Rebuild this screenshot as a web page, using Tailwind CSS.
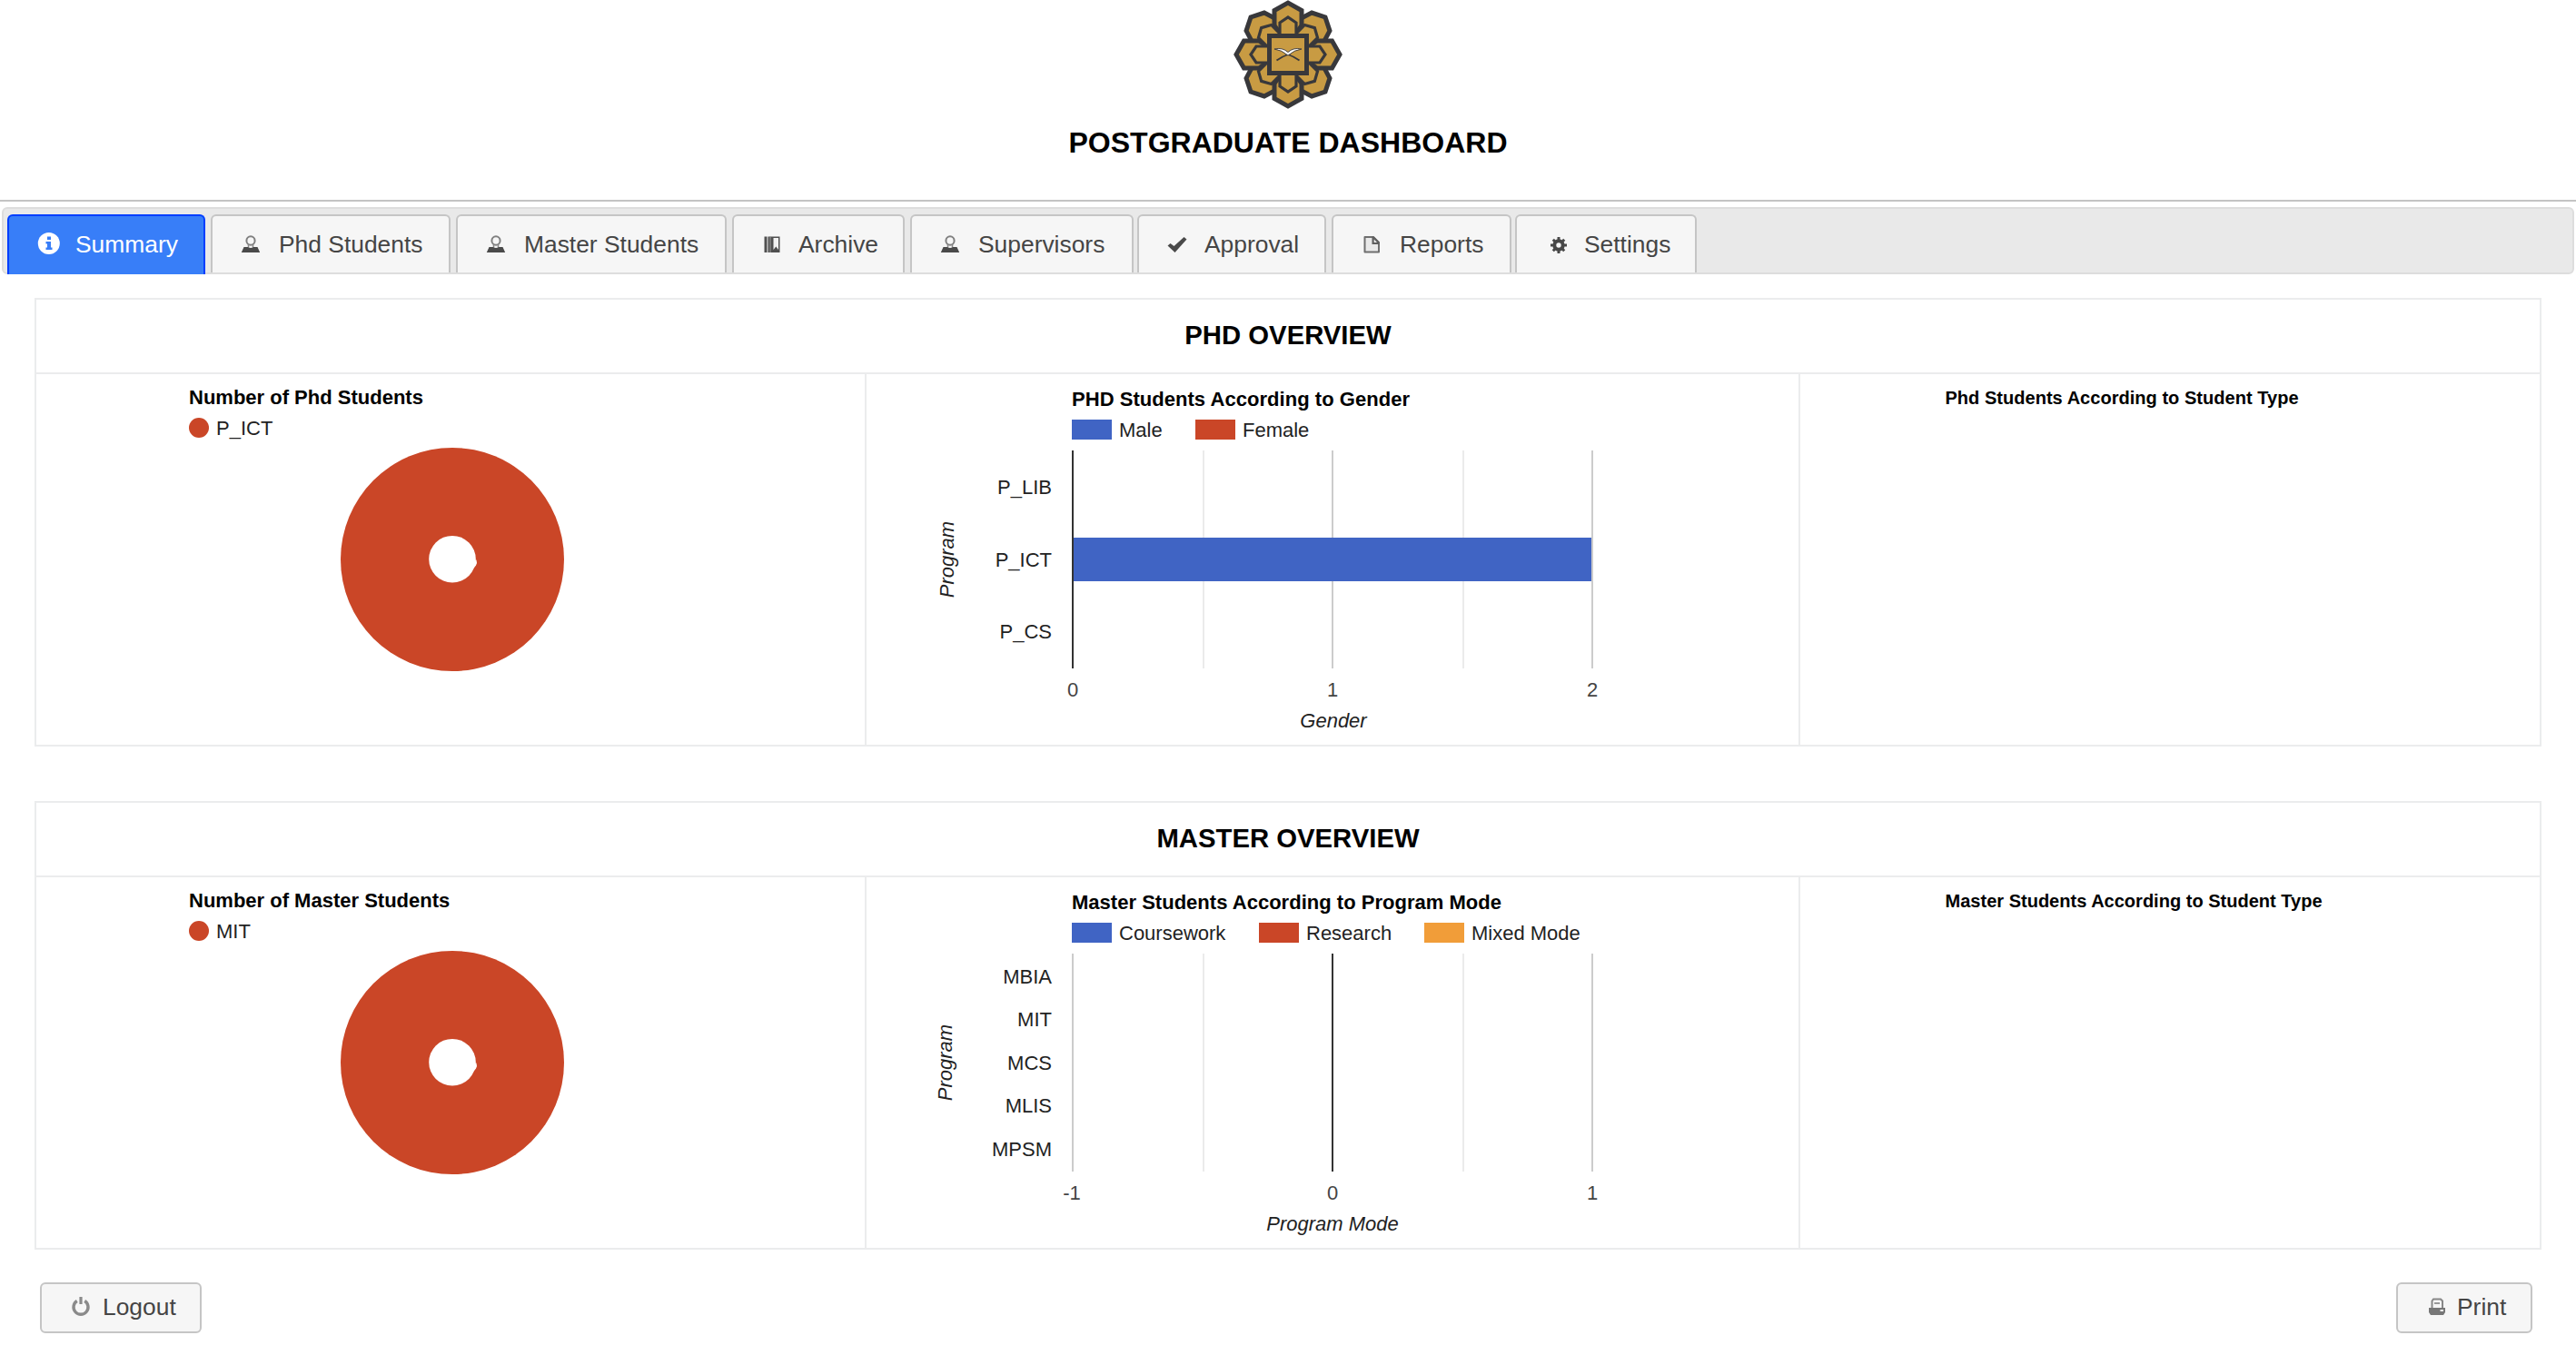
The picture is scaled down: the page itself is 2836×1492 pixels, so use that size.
<!DOCTYPE html>
<html lang="en">
<head>
<meta charset="utf-8">
<title>Postgraduate Dashboard</title>
<script src="https://cdn.jsdelivr.net/npm/@tailwindcss/browser@4"></script>
</head>
<body class="bg-white font-['Liberation_Sans',Arial,sans-serif] text-black w-[2836px] h-[1492px] overflow-hidden">
<svg class="hidden">
  <defs>
    <symbol id="user" viewBox="0 0 32 32"><ellipse cx="16" cy="13" rx="4.600" ry="4.800" fill="none" stroke="#808080" stroke-width="2"/><path d="M13.500 17v3.500M18.500 17v3.500" stroke="#888" stroke-width="1.500"/><path d="M8.500 20h4.500q3 2 6 0h4.500l2.700 6h-20.400z" fill="#4a4a4a"/></symbol>
  </defs>
</svg>

<header class="flex flex-col items-center h-[222px] border-b-2 border-[#c4c4c4]">
  <svg class="w-[120px] h-[120px]" viewBox="-60 -60 120 120">
    <g fill="#c89b43" stroke="#38383b" stroke-width="5">
      <path d="M0-18L-18-38L-14-51L0-58L14-51L18-38Z" transform="rotate(45)"/><path d="M0-18L-18-38L-14-51L0-58L14-51L18-38Z" transform="rotate(135)"/><path d="M0-18L-18-38L-14-51L0-58L14-51L18-38Z" transform="rotate(225)"/><path d="M0-18L-18-38L-14-51L0-58L14-51L18-38Z" transform="rotate(315)"/>
      <path d="M-15-32V-48.500L0-57L15-48.500V-32L0-10Z"/><path d="M-15-32V-48.500L0-57L15-48.500V-32L0-10Z" transform="rotate(90)"/><path d="M-15-32V-48.500L0-57L15-48.500V-32L0-10Z" transform="rotate(180)"/><path d="M-15-32V-48.500L0-57L15-48.500V-32L0-10Z" transform="rotate(270)"/>
    </g>
    <g fill="#c89b43" stroke="#38383b" stroke-width="3.200">
      <path d="M-10-20V-36L0-41.500L10-36V-20Z" transform="rotate(45)"/><path d="M-10-20V-36L0-41.500L10-36V-20Z" transform="rotate(135)"/><path d="M-10-20V-36L0-41.500L10-36V-20Z" transform="rotate(225)"/><path d="M-10-20V-36L0-41.500L10-36V-20Z" transform="rotate(315)"/>
      <path d="M-9-20V-35L0-41L9-35V-20Z"/><path d="M-9-20V-35L0-41L9-35V-20Z" transform="rotate(90)"/><path d="M-9-20V-35L0-41L9-35V-20Z" transform="rotate(180)"/><path d="M-9-20V-35L0-41L9-35V-20Z" transform="rotate(270)"/>
    </g>
    <rect x="-20.500" y="-20.500" width="41" height="41" fill="#c89b43" stroke="#38383b" stroke-width="5"/>
    <path d="M0 0Q-6 2-12.500 6.500M0 0Q6 2 12.500 6.500" fill="none" stroke="#38383b" stroke-width="1.800"/>
    <path d="M-15-6Q-6-8 0-2.500Q6-8 15-6Q7-5 0 1Q-7-5-15-6Z" fill="#fff" stroke="#38383b" stroke-width=".9"/>
  </svg>
  <h1 class="mt-[19px] text-[32px] leading-9 font-bold">POSTGRADUATE DASHBOARD</h1>
</header>

<nav class="mt-[6px] mx-[2px] h-[74px] rounded-md border-2 border-[#dddddd] bg-[#e9e9e9] flex pl-1 pt-[6px] text-[26.4px] leading-8 text-[#454545] whitespace-nowrap">
  <a class="w-[218px] h-[66px] mr-[6px] flex pl-[26px] pt-[14px] gap-[15px] rounded-t-md border-2 border-b-0 border-[#003eff] bg-[#387ef8] text-white"><svg class="size-8 shrink-0" viewBox="0 0 32 32"><circle cx="17.800" cy="16" r="12" fill="#fff"/><path d="M16 8.500h4v3.500h-4zM14.500 14h5.500v6.500h1.500v2.500h-7v-2.500h1.500v-4h-1.500z" fill="#387ef8"/></svg><span class="pt-px">Summary</span></a>
  <a class="w-[264px] h-16 mr-[6px] flex pl-[26px] pt-[14px] gap-[15px] rounded-t-md border-2 border-b-0 border-[#c5c5c5] bg-[#f6f6f6]"><svg class="size-8 shrink-0"><use href="#user"/></svg><span class="pt-px">Phd Students</span></a>
  <a class="w-[298px] h-16 mr-[6px] flex pl-[26px] pt-[14px] gap-[15px] rounded-t-md border-2 border-b-0 border-[#c5c5c5] bg-[#f6f6f6]"><svg class="size-8 shrink-0"><use href="#user"/></svg><span class="pt-px">Master Students</span></a>
  <a class="w-[190px] h-16 mr-[6px] flex pl-[26px] pt-[14px] gap-[13px] rounded-t-md border-2 border-b-0 border-[#c5c5c5] bg-[#f6f6f6]"><svg class="size-8 shrink-0" viewBox="0 0 32 32"><path d="M7.500 8.500h3v17.500h-3zM11.500 8.500h13v17.500h-13z" fill="#505050"/><path d="M13.500 8.500h1v17.500h-1z" fill="#999"/><path d="M17.500 10h5.500v13l-2.700-3.500-2.800 3.500z" fill="#f2f2f2"/></svg><span class="pt-px">Archive</span></a>
  <a class="w-[246px] h-16 mr-1 flex pl-[26px] pt-[14px] gap-[15px] rounded-t-md border-2 border-b-0 border-[#c5c5c5] bg-[#f6f6f6]"><svg class="size-8 shrink-0"><use href="#user"/></svg><span class="pt-px">Supervisors</span></a>
  <a class="w-[208px] h-16 mr-[6px] flex pl-[26px] pt-[14px] gap-[14px] rounded-t-md border-2 border-b-0 border-[#c5c5c5] bg-[#f6f6f6]"><svg class="size-8 shrink-0" viewBox="0 0 32 32"><path d="M5.500 18.500l3-2.500 4 3L23.500 9l3 2.500L13.500 26z" fill="#4a4a4a"/></svg><span class="pt-px">Approval</span></a>
  <a class="w-[198px] h-16 mr-1 flex pl-[26px] pt-[14px] gap-[15px] rounded-t-md border-2 border-b-0 border-[#c5c5c5] bg-[#f6f6f6]"><svg class="size-8 shrink-0" viewBox="0 0 32 32"><path d="M8.500 9h9.500l6 6v10.500h-15.500z" fill="#e9e9e9" stroke="#6f6f6f" stroke-width="2" stroke-linejoin="round"/><path d="M16.500 8.500h2l6 6v2.500h-8z" fill="#5f5f5f"/><path d="M18.700 11.500l3.300 3.500h-3.300z" fill="#eee"/></svg><span class="pt-px">Reports</span></a>
  <a class="w-[200px] h-16 flex pl-[26px] pt-[14px] gap-4 rounded-t-md border-2 border-b-0 border-[#c5c5c5] bg-[#f6f6f6]"><svg class="size-8 shrink-0" viewBox="0 0 32 32"><g fill="none" stroke="#484848"><circle cx="20" cy="18" r="4.700" stroke-width="4"/><path d="M20 9V12M20 24v3M11 18H14M26 18h3M13.800 11.800l2.200 2.200M24 22l2.200 2.200M13.800 24.200L16 22M24 14l2.200-2.200" stroke-width="3"/></g></svg><span class="pt-px">Settings</span></a>
</nav>

<main class="px-[38px] pt-[26px]">
  <section class="h-[494px] border-2 border-[#ebeced]">
    <h2 class="h-20 pb-0.5 flex items-center justify-center text-[29.3px] font-bold">PHD OVERVIEW</h2>
    <div class="h-[410px] border-t-2 border-[#ebeced] grid grid-cols-[914px_1028px_814px]">
      <svg class="w-[912px] h-[408px]" viewBox="40 412 912 408" font-size="22">
        <text x="208" y="445" font-weight="bold">Number of Phd Students</text>
        <circle cx="219" cy="471" r="11" fill="#ca4627"/>
        <text x="238" y="478.500" fill="#222">P_ICT</text>
        <circle cx="498" cy="616" r="123" fill="#ca4627"/>
        <circle cx="498" cy="615.700" r="25.800" fill="#fff"/><path d="M522 616.500h2.500l.5 3.500-1 2.500-2 2.500z" fill="#fff"/>
      </svg>
      <svg class="w-[1028px] h-[408px] border-l-2 border-[#ebeced] -ml-[2px]" viewBox="954 412 1026 408" font-size="22" fill="#222">
        <text x="1180" y="446.500" font-weight="bold" fill="#000" textLength="372">PHD Students According to Gender</text>
        <path d="M1180 462h44v22h-44z" fill="#4064c4"/><text x="1232" y="481">Male</text>
        <path d="M1316 462h44v22h-44z" fill="#ca4627"/><text x="1368" y="481">Female</text>
        <path d="M1324 496h2v240h-2zM1610 496h2v240h-2z" fill="#ebebeb"/>
        <path d="M1466 496h2v240h-2zM1752 496h2v240h-2z" fill="#ccc"/>
        <path d="M1182 592h570v48h-570z" fill="#4064c4"/>
        <path d="M1180 496h2v240h-2z" fill="#333"/>
        <g text-anchor="end"><text x="1158" y="544">P_LIB</text><text x="1158" y="624">P_ICT</text><text x="1158" y="703">P_CS</text></g>
        <g text-anchor="middle" fill="#444"><text x="1181" y="767">0</text><text x="1467" y="767">1</text><text x="1753" y="767">2</text></g>
        <g text-anchor="middle" font-style="italic"><text x="1468" y="801">Gender</text><text transform="translate(1050 616) rotate(-90)">Program</text></g>
      </svg>
      <svg class="w-[816px] h-[408px] border-l-2 border-[#ebeced] -ml-[2px]" viewBox="1982 412 814 408" font-size="20" font-weight="bold"><text x="2141.500" y="445" textLength="389">Phd Students According to Student Type</text></svg>
    </div>
  </section>

  <section class="mt-[60px] h-[494px] border-2 border-[#ebeced]">
    <h2 class="h-20 pb-0.5 flex items-center justify-center text-[29.3px] font-bold">MASTER OVERVIEW</h2>
    <div class="h-[410px] border-t-2 border-[#ebeced] grid grid-cols-[914px_1028px_814px]">
      <svg class="w-[912px] h-[408px]" viewBox="40 966 912 408" font-size="22">
        <text x="208" y="999" font-weight="bold">Number of Master Students</text>
        <circle cx="219" cy="1025" r="11" fill="#ca4627"/>
        <text x="238" y="1032.500" fill="#222">MIT</text>
        <circle cx="498" cy="1170" r="123" fill="#ca4627"/>
        <circle cx="498" cy="1169.700" r="25.800" fill="#fff"/><path d="M522 1170.500h2.500l.5 3.500-1 2.500-2 2.500z" fill="#fff"/>
      </svg>
      <svg class="w-[1028px] h-[408px] border-l-2 border-[#ebeced] -ml-[2px]" viewBox="954 966 1026 408" font-size="22" fill="#222">
        <text x="1180" y="1000.500" font-weight="bold" fill="#000" textLength="473">Master Students According to Program Mode</text>
        <path d="M1180 1016h44v22h-44z" fill="#4064c4"/><text x="1232" y="1035">Coursework</text>
        <path d="M1386 1016h44v22h-44z" fill="#ca4627"/><text x="1438" y="1035">Research</text>
        <path d="M1568 1016h44v22h-44z" fill="#f19d39"/><text x="1620" y="1035">Mixed Mode</text>
        <path d="M1324 1050h2v240h-2zM1610 1050h2v240h-2z" fill="#ebebeb"/>
        <path d="M1180 1050h2v240h-2zM1752 1050h2v240h-2z" fill="#ccc"/>
        <path d="M1466 1050h2v240h-2z" fill="#333"/>
        <g text-anchor="end"><text x="1158" y="1083">MBIA</text><text x="1158" y="1130">MIT</text><text x="1158" y="1178">MCS</text><text x="1158" y="1225">MLIS</text><text x="1158" y="1273">MPSM</text></g>
        <g text-anchor="middle" fill="#444"><text x="1180" y="1321">-1</text><text x="1467" y="1321">0</text><text x="1753" y="1321">1</text></g>
        <g text-anchor="middle" font-style="italic"><text x="1467" y="1355">Program Mode</text><text transform="translate(1048 1170) rotate(-90)">Program</text></g>
      </svg>
      <svg class="w-[816px] h-[408px] border-l-2 border-[#ebeced] -ml-[2px]" viewBox="1982 966 814 408" font-size="20" font-weight="bold"><text x="2141.500" y="999" textLength="415">Master Students According to Student Type</text></svg>
    </div>
  </section>
</main>

<footer class="mt-9 pl-11 pr-12 flex justify-between text-[26.4px] leading-8 text-[#454545]">
  <button class="w-[178px] h-14 flex pl-[26px] pt-[9px] gap-[9px] rounded-md border-2 border-[#c5c5c5] bg-[#f6f6f6]"><svg class="size-8" viewBox="0 0 32 32"><path d="M12.800 9.500a8 8 0 1 0 8.400 0" fill="none" stroke="#8a8a8a" stroke-width="3.400"/><path d="M17 5v8" stroke="#8a8a8a" stroke-width="3.200"/></svg><span>Logout</span></button>
  <button class="w-[150px] h-14 flex pl-[26px] pt-[9px] gap-[7px] rounded-md border-2 border-[#c5c5c5] bg-[#f6f6f6]"><svg class="size-8" viewBox="0 0 32 32"><path d="M11.500 17V9.500l1.500-2h8l2 2V17" fill="none" stroke="#888" stroke-width="2"/><path d="M14 12h6" stroke="#999" stroke-width="2"/><path d="M8 17h18v5l-2 3H10l-2-3z" fill="#777"/><rect x="20.500" y="19" width="3.500" height="2" fill="#eee"/></svg><span>Print</span></button>
</footer>
</body>
</html>
